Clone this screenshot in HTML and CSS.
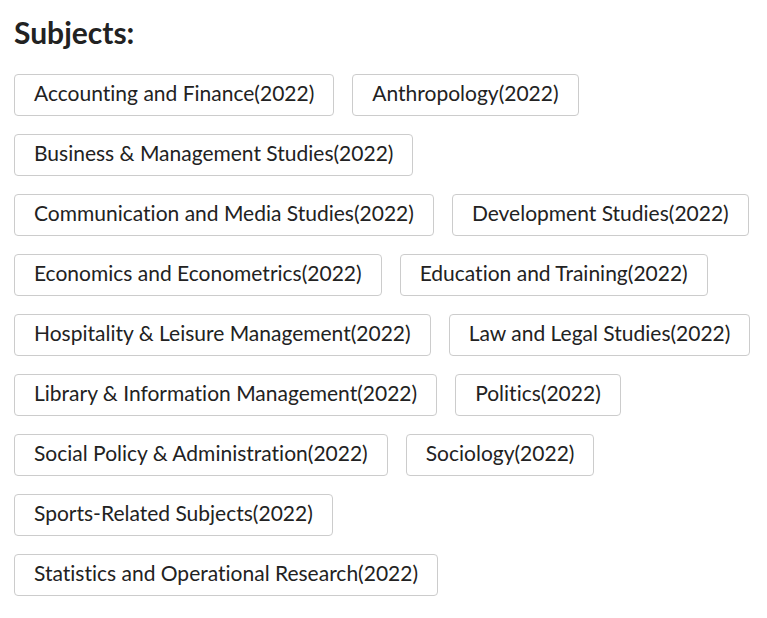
FILE: index.html
```html
<!DOCTYPE html>
<html>
<head>
<meta charset="utf-8">
<link rel="stylesheet" href="styles.css">
</head>
<body>
<div class="page">
  <h2 class="title">Subjects:</h2>
  <div class="tags">
    <span class="tag">Accounting and Finance(2022)</span>
    <span class="tag">Anthropology(2022)</span>
    <span class="tag">Business &amp; Management Studies(2022)</span>
    <span class="tag">Communication and Media Studies(2022)</span>
    <span class="tag">Development Studies(2022)</span>
    <span class="tag">Economics and Econometrics(2022)</span>
    <span class="tag">Education and Training(2022)</span>
    <span class="tag">Hospitality &amp; Leisure Management(2022)</span>
    <span class="tag">Law and Legal Studies(2022)</span>
    <span class="tag">Library &amp; Information Management(2022)</span>
    <span class="tag">Politics(2022)</span>
    <span class="tag">Social Policy &amp; Administration(2022)</span>
    <span class="tag">Sociology(2022)</span>
    <span class="tag">Sports-Related Subjects(2022)</span>
    <span class="tag">Statistics and Operational Research(2022)</span>
  </div>
</div>
</body>
</html>
```
FILE: styles.css
```css
html, body {
  margin: 0;
  padding: 0;
  background: #fff;
}
body {
  font-family: Lato, "Open Sans", sans-serif;
  color: #222;
  font-variant-ligatures: none;
  font-feature-settings: "liga" 0, "clig" 0;
}
.page {
  padding: 14px 14px 0 14px;
}
.title {
  margin: 0 0 24px 0;
  font-size: 30px;
  font-weight: 700;
  line-height: 36px;
  color: #222;
}
.tags {
  display: flex;
  flex-wrap: wrap;
  gap: 18px;
}
.tag {
  display: inline-block;
  box-sizing: border-box;
  height: 42px;
  line-height: 36px;
  padding: 0 19px 4px 19px;
  border: 1px solid #ccc;
  border-radius: 4px;
  font-size: 21px;
  color: #222;
  white-space: nowrap;
}
```
